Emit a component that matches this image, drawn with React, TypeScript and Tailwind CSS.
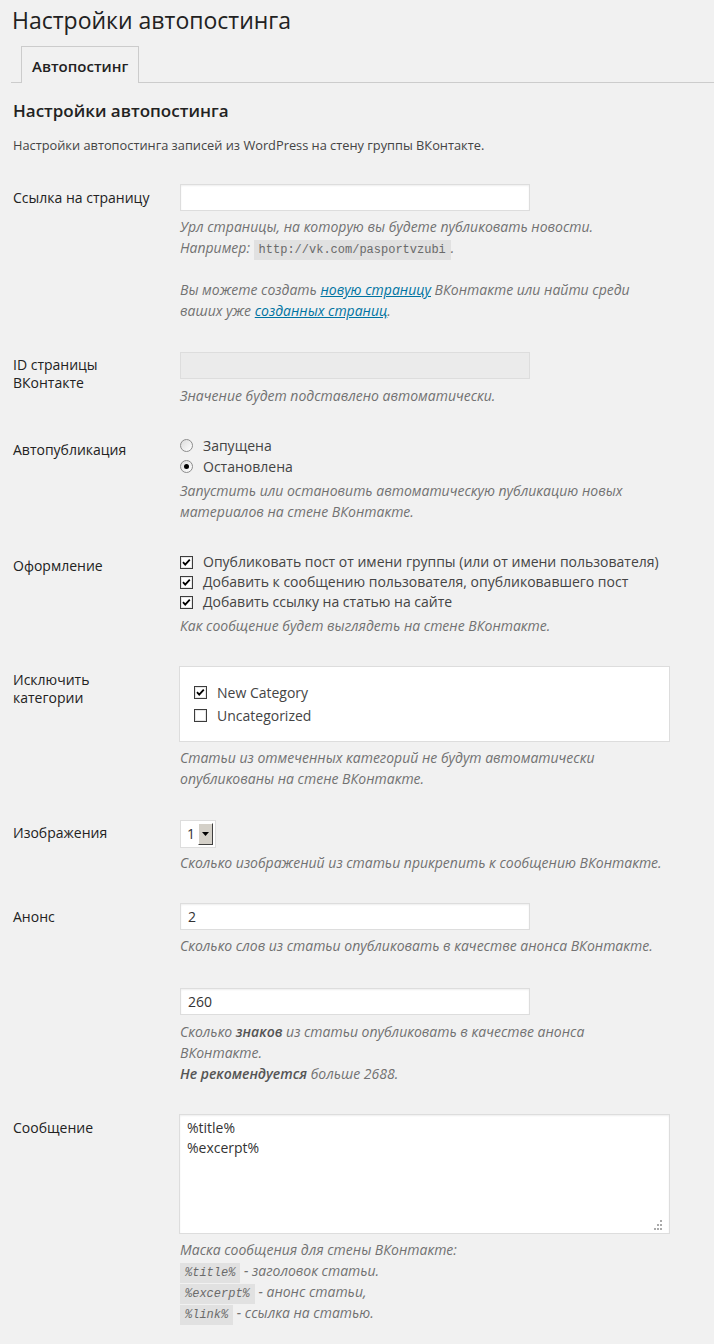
import type { ReactNode } from 'react';

function Radio({ checked }: { checked?: boolean }) {
  return (
    <span className="w-[13px] h-[13px] shrink-0 rounded-full border border-[#8c8c8c] bg-gradient-to-br from-[#dcdcdc] to-white flex items-center justify-center">
      {checked && <span className="w-[5px] h-[5px] rounded-full bg-black" />}
    </span>
  );
}

function Check({ checked }: { checked?: boolean }) {
  return (
    <svg width="13" height="13" viewBox="0 0 13 13" className="shrink-0">
      <rect x="0.5" y="0.5" width="12" height="12" fill="#fff" stroke="#3c3c3c" />
      <rect x="1.5" y="1.5" width="10" height="10" fill="none" stroke="#e6e6e6" />
      {checked && (
        <path d="M3 6.2 L5.2 8.6 L9.8 3.6" fill="none" stroke="#000" strokeWidth="1.8" />
      )}
    </svg>
  );
}

function Code({ children, italic }: { children: ReactNode; italic?: boolean }) {
  return (
    <code
      className={`bg-[#e1e1e1] px-[5px] pt-[3px] pb-[3px] text-[12px] leading-none text-[#6a6a6a] font-['Liberation_Mono',monospace] ${
        italic ? 'italic' : 'not-italic'
      }`}
    >
      {children}
    </code>
  );
}

function Desc({ children, className = '' }: { children: ReactNode; className?: string }) {
  return (
    <p className={`text-[14px] leading-[21px] italic text-[#727272] whitespace-nowrap ${className}`}>
      {children}
    </p>
  );
}

function Row({ label, children }: { label: ReactNode; children: ReactNode }) {
  return (
    <div className="grid grid-cols-[169px_490px]">
      <div className="pt-[20px] pb-[20px] pl-[2px] text-[14px] leading-[18px] text-[#222]">{label}</div>
      <div className="py-[15px]">{children}</div>
    </div>
  );
}

const input =
  'block w-[350px] h-[27px] border border-[#ddd] bg-white shadow-[inset_0_1px_2px_rgba(0,0,0,0.07)] px-[7px] text-[14px] text-[#333]';

export default function App() {
  return (
    <div className="min-h-screen bg-[#f1f1f1] font-['Open_Sans',sans-serif] text-[#444] pl-[11px]">
      {/* Page title */}
      <h2 className="pt-[6px] pl-[1px] text-[23px] leading-[29px] text-[#222]">Настройки автопостинга</h2>

      {/* Tabs */}
      <div className="mt-[11px] border-b border-[#ccc] flex pl-[10px]">
        <span className="-mb-px border border-b-0 border-[#ccc] bg-[#f1f1f1] w-[118px] pl-[10px] pt-[7px] pb-[5px] text-[15px] leading-[24px] font-semibold text-[#222]">
          Автопостинг
        </span>
      </div>

      <h3 className="mt-[17px] pl-[2px] text-[17px] leading-[22px] font-semibold text-[#222]">
        Настройки автопостинга
      </h3>
      <p className="mt-[14px] pl-[2px] text-[12.8px] leading-[19px]">
        Настройки автопостинга записей из WordPress на стену группы ВКонтакте.
      </p>

      <div className="mt-[14px]">
        <Row label="Ссылка на страницу">
          <input className={input} />
          <Desc className="mt-[5px]">
            Урл страницы, на которую вы будете публиковать новости.
            <br />
            Например: <Code>http://vk.com/pasportvzubi</Code>.
            <br />
            <br />
            Вы можете создать{' '}
            <a className="text-[#0074a2] underline">новую страницу</a> ВКонтакте или найти среди
            <br />
            ваших уже <a className="text-[#0074a2] underline">созданных страниц</a>.
          </Desc>
        </Row>

        <Row
          label={
            <>
              ID страницы
              <br />
              ВКонтакте
            </>
          }
        >
          <div className="mt-[1px] w-[350px] h-[27px] border border-[#ddd] bg-[#ebebeb]" />
          <Desc className="mt-[6px]">Значение будет подставлено автоматически.</Desc>
        </Row>

        <Row label="Автопубликация">
          <div className="-mt-[1px] text-[14px] leading-[21px]">
            <label className="flex items-center gap-[10px]">
              <Radio />
              Запущена
            </label>
            <label className="flex items-center gap-[10px]">
              <Radio checked />
              Остановлена
            </label>
          </div>
          <Desc className="mt-[3px]">
            Запустить или остановить автоматическую публикацию новых
            <br />
            материалов на стене ВКонтакте.
          </Desc>
        </Row>

        <Row label="Оформление">
          <div className="text-[14px] leading-[20px]">
            <label className="flex items-center gap-[10px]">
              <Check checked />
              Опубликовать пост от имени группы (или от имени пользователя)
            </label>
            <label className="flex items-center gap-[10px]">
              <Check checked />
              Добавить к сообщению пользователя, опубликовавшего пост
            </label>
            <label className="flex items-center gap-[10px]">
              <Check checked />
              Добавить ссылку на статью на сайте
            </label>
          </div>
          <Desc className="mt-[3px]">Как сообщение будет выглядеть на стене ВКонтакте.</Desc>
        </Row>

        <Row
          label={
            <>
              Исключить
              <br />
              категории
            </>
          }
        >
          <div className="w-[491px] h-[76px] -ml-px border border-[#ddd] bg-white px-[14px] py-[14px] text-[14px] leading-[23px]">
            <label className="flex items-center gap-[10px]">
              <Check checked />
              New Category
            </label>
            <label className="flex items-center gap-[10px]">
              <Check />
              Uncategorized
            </label>
          </div>
          <Desc className="mt-[5px]">
            Статьи из отмеченных категорий не будут автоматически
            <br />
            опубликованы на стене ВКонтакте.
          </Desc>
        </Row>

        <Row label="Изображения">
          <div className="mt-[1px] w-[36px] h-[28px] border border-[#ddd] bg-white flex items-center pl-[6px] pr-[2px] justify-between">
            <span className="text-[14px] leading-none text-[#333]">1</span>
            <span className="w-[15px] h-[22px] bg-[#d4d0c8] border border-t-white border-l-white border-b-[#404040] border-r-[#404040] flex items-center justify-center">
              <svg width="7" height="4" viewBox="0 0 7 4">
                <path d="M0 0 H7 L3.5 4 Z" fill="#000" />
              </svg>
            </span>
          </div>
          <Desc className="mt-[4px]">Сколько изображений из статьи прикрепить к сообщению ВКонтакте.</Desc>
        </Row>

        <Row label="Анонс">
          <input className={input} defaultValue="2" />
          <Desc className="mt-[5px]">Сколько слов из статьи опубликовать в качестве анонса ВКонтакте.</Desc>
          <input className={`${input} mt-[32px]`} defaultValue="260" />
          <Desc className="mt-[6px]">
            Сколько <b className="font-semibold text-[#555]">знаков</b> из статьи опубликовать в качестве анонса
            <br />
            ВКонтакте.
            <br />
            <b className="font-semibold text-[#555]">Не рекомендуется</b> больше 2688.
          </Desc>
        </Row>

        <Row label="Сообщение">
          <div className="relative -ml-px w-[491px] h-[120px] border border-[#ddd] bg-white shadow-[inset_0_1px_2px_rgba(0,0,0,0.07)] px-[7px] pt-[3px] text-[14px] leading-[20px] text-[#333]">
            <div>%title%</div>
            <div>%excerpt%</div>
            <svg width="10" height="10" viewBox="0 0 10 10" className="absolute right-[6px] bottom-[3px]">
              <rect x="7" y="0" width="2" height="2" fill="#aaa" />
              <rect x="4" y="4" width="2" height="2" fill="#aaa" />
              <rect x="7" y="4" width="2" height="2" fill="#aaa" />
              <rect x="1" y="8" width="2" height="2" fill="#aaa" />
              <rect x="4" y="8" width="2" height="2" fill="#aaa" />
              <rect x="7" y="8" width="2" height="2" fill="#aaa" />
            </svg>
          </div>
          <Desc className="mt-[5px]">
            Маска сообщения для стены ВКонтакте:
            <br />
            <Code italic>%title%</Code> - заголовок статьи.
            <br />
            <Code italic>%excerpt%</Code> - анонс статьи,
            <br />
            <Code italic>%link%</Code> - ссылка на статью.
          </Desc>
        </Row>
      </div>
    </div>
  );
}
